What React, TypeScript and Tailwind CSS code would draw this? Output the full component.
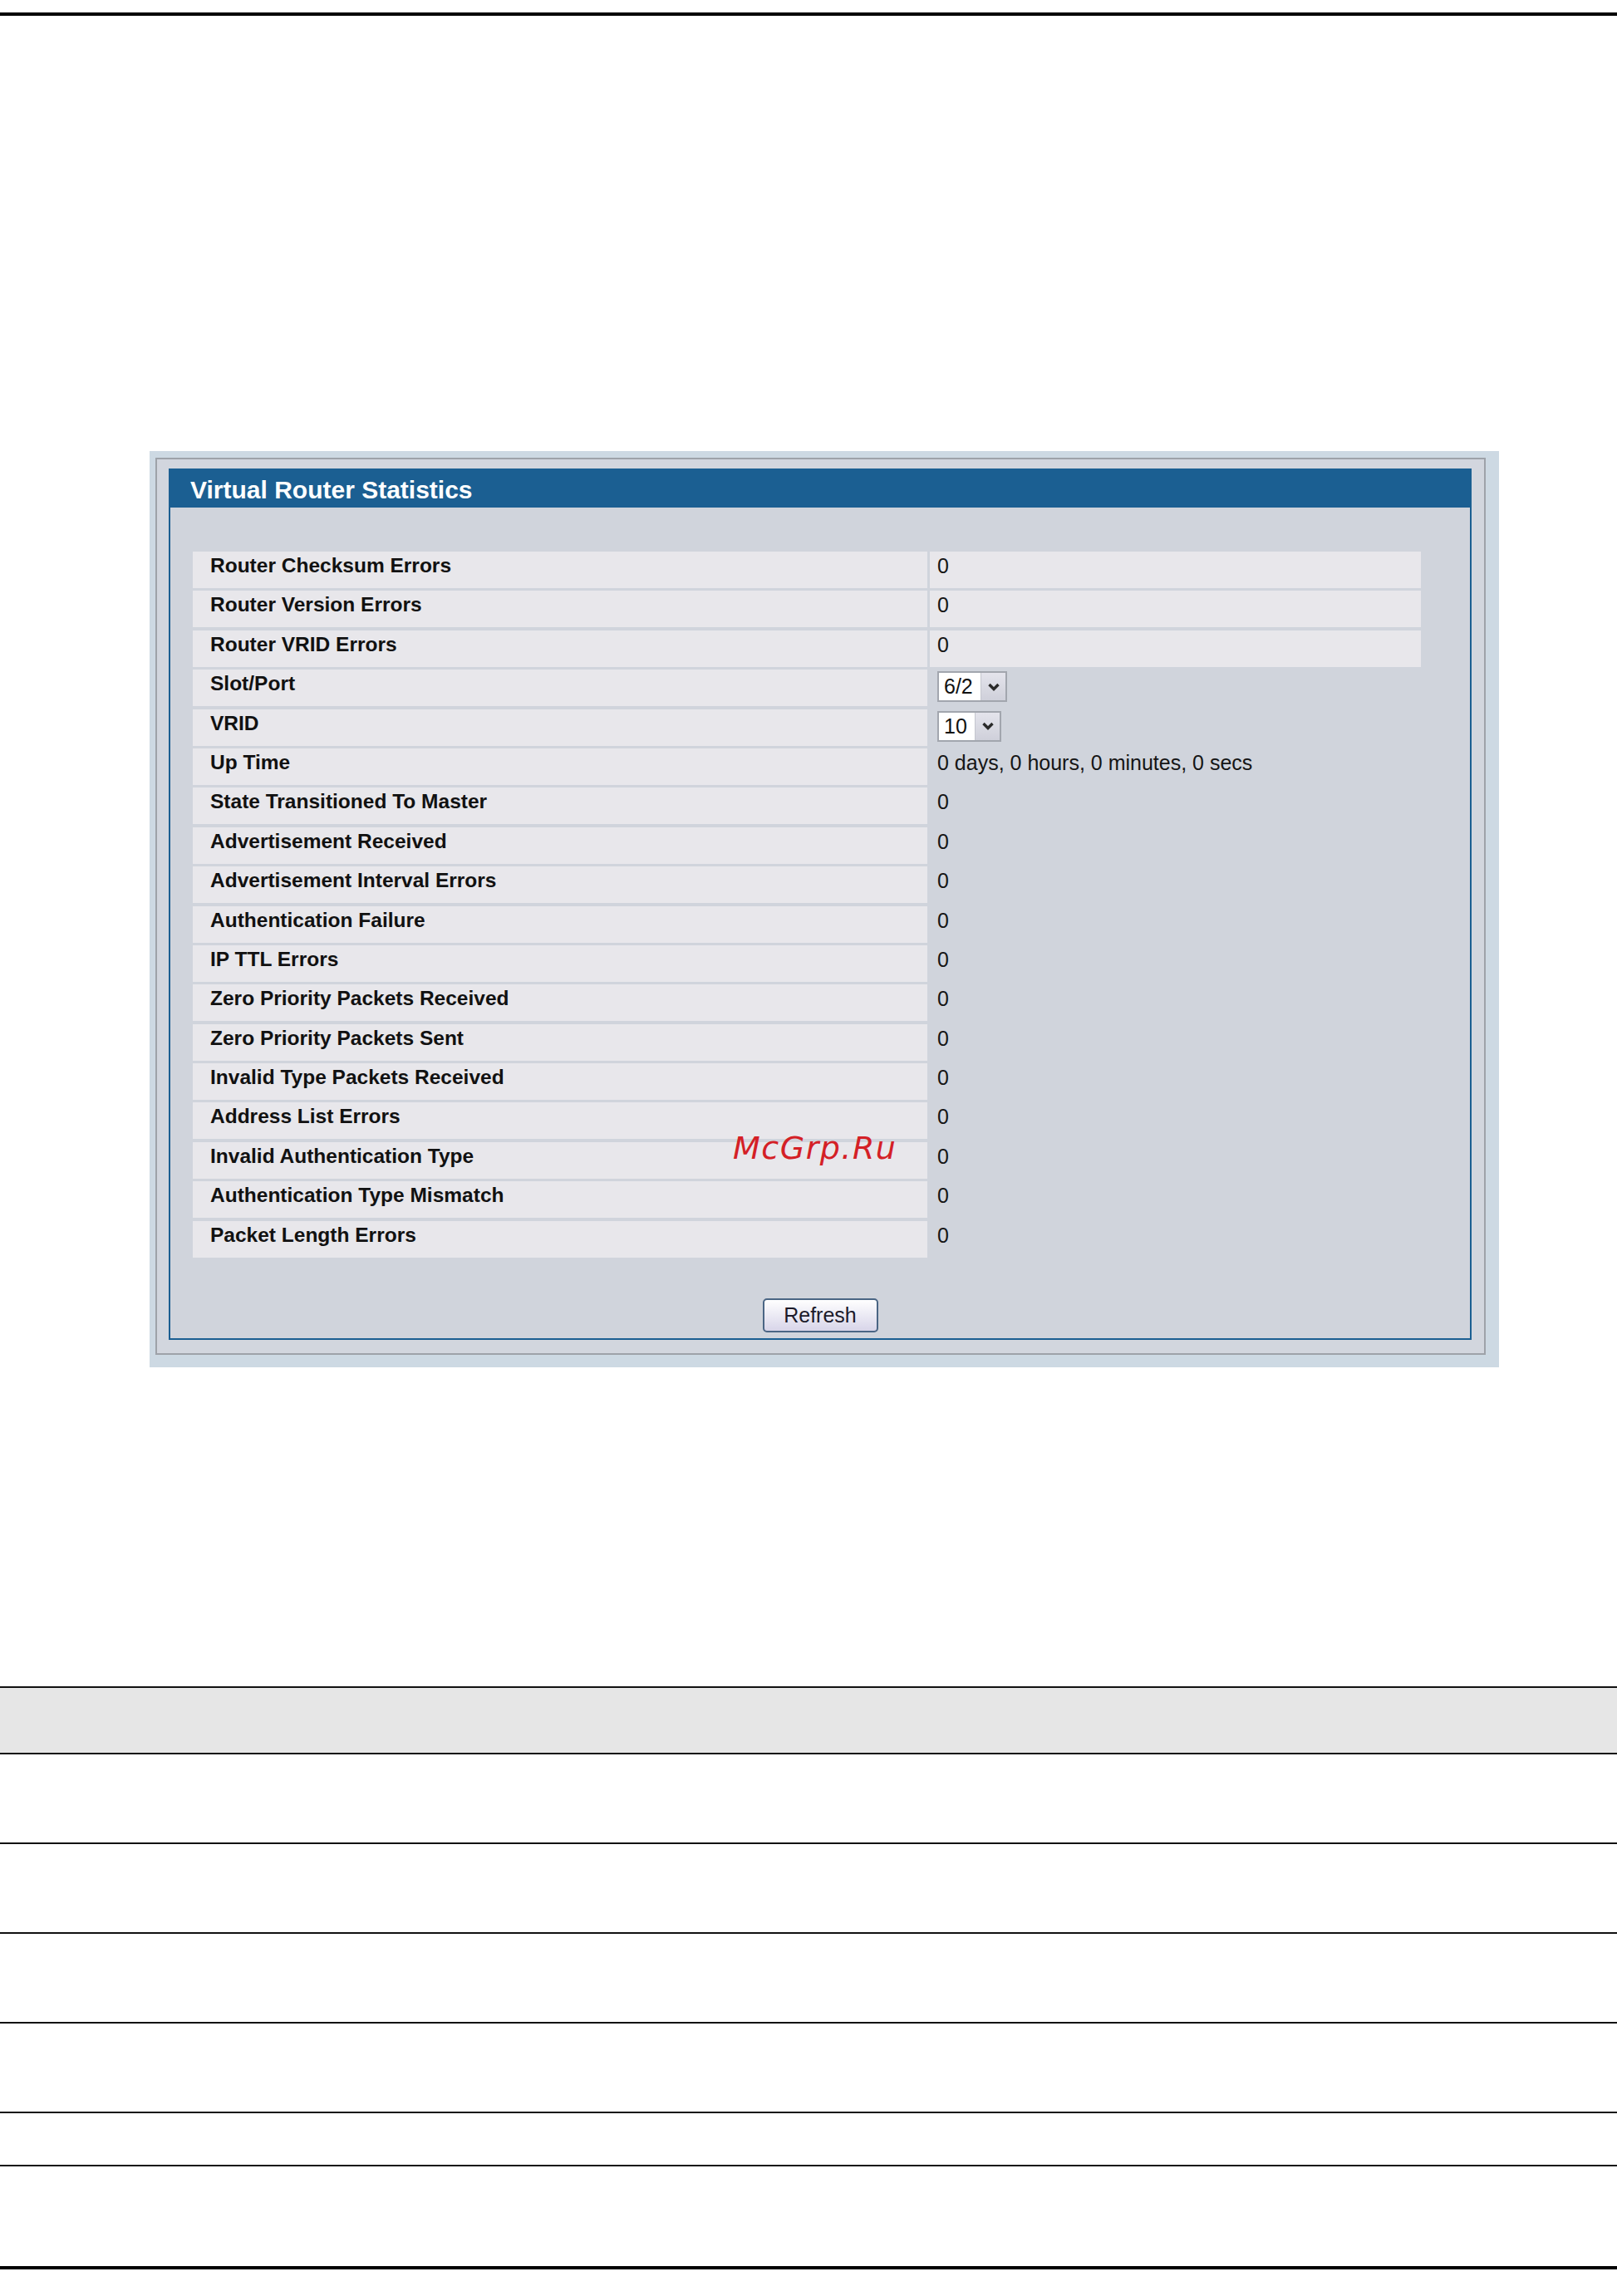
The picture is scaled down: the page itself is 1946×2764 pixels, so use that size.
const rows: { label: string; value: string; cell?: boolean; select?: string }[] = [
  { label: "Router Checksum Errors", value: "0", cell: true },
  { label: "Router Version Errors", value: "0", cell: true },
  { label: "Router VRID Errors", value: "0", cell: true },
  { label: "Slot/Port", value: "6/2", select: "w-[84px]" },
  { label: "VRID", value: "10", select: "w-[77px]" },
  { label: "Up Time", value: "0 days, 0 hours, 0 minutes, 0 secs" },
  { label: "State Transitioned To Master", value: "0" },
  { label: "Advertisement Received", value: "0" },
  { label: "Advertisement Interval Errors", value: "0" },
  { label: "Authentication Failure", value: "0" },
  { label: "IP TTL Errors", value: "0" },
  { label: "Zero Priority Packets Received", value: "0" },
  { label: "Zero Priority Packets Sent", value: "0" },
  { label: "Invalid Type Packets Received", value: "0" },
  { label: "Address List Errors", value: "0" },
  { label: "Invalid Authentication Type", value: "0" },
  { label: "Authentication Type Mismatch", value: "0" },
  { label: "Packet Length Errors", value: "0" },
];

// heights of the empty rows in the table below the screenshot
const tableRows = [108, 108, 108, 108, 64, 122];

const Select = ({ value, width }: { value: string; width: string }) => (
  <div className={`mt-[2px] h-[37px] ${width} flex border-2 border-[#a2a6ae] bg-white`}>
    <div className="flex-1 pl-[6px] text-[25px] leading-[33px] text-[#111]">{value}</div>
    <div className="w-[30px] h-full bg-gradient-to-b from-[#e4e4ec] to-[#cfd0da] border-l border-[#c4c6ce] flex items-center justify-center">
      <svg width="16" height="12" viewBox="0 0 16 12">
        <path d="M2.5 3 L8 8.5 L13.5 3" fill="none" stroke="#2a2a2a" strokeWidth="3.4" />
      </svg>
    </div>
  </div>
);

export default function App() {
  return (
    <div className="relative w-[1946px] h-[2764px] bg-white font-['Liberation_Sans',Arial,sans-serif]">
      <div className="pt-[15px]">
        <div className="h-[4px] bg-black" />
      </div>

      {/* screenshot panel */}
      <div className="ml-[180px] mt-[524px] w-[1624px] h-[1103px] bg-[#cdd9e3] pl-[7px] pt-[8px]">
        <div className="w-[1601px] h-[1080px] border-2 border-[#9ea2a9] bg-[#d2d6de] pl-[14px] pt-[11px]">
          <div className="w-[1568px] h-[1049px] border-2 border-[#1b5f92] bg-[#d0d4dc] flex flex-col">
            <div className="h-[45px] bg-[#1b5f92] pl-[24px] text-white font-bold text-[30px] leading-[47px]">
              Virtual Router Statistics
            </div>

            <div className="pl-[27px] pt-[53px] flex flex-col gap-[3.4px]">
              {rows.map((r) => (
                <div key={r.label} className="flex h-[44px] w-[1478px] gap-[3px]">
                  <div className="w-[884px] h-full bg-[#e8e7eb] pl-[21px] font-bold text-[24.5px] leading-[34px] text-[#111]">
                    {r.label}
                  </div>
                  <div
                    className={`flex-1 h-full pl-[9px] text-[25px] leading-[34px] text-[#151515] ${r.cell ? "bg-[#e8e7eb]" : ""}`}
                  >
                    {r.select ? <Select value={r.value} width={r.select} /> : r.value}
                  </div>
                </div>
              ))}
            </div>

            <div className="mt-[49px] flex justify-center">
              <button className="w-[139px] h-[41px] rounded-[5px] border-2 border-[#4a6584] bg-gradient-to-b from-white to-[#d8d5e9] text-[25px] leading-[35px] text-[#1c1a2a]">
                Refresh
              </button>
            </div>
          </div>
        </div>
      </div>

      {/* watermark */}
      <div className="absolute left-[882px] top-[1363px] text-[38px] leading-none italic tracking-[1.5px] text-[#d42026] font-['DejaVu_Sans',sans-serif]">
        McGrp.Ru
      </div>

      {/* empty table below */}
      <div className="mt-[384px]">
        <div className="h-[80px] border-t-2 border-[#111] bg-[#e6e6e6]" />
        {tableRows.map((h, i) => (
          <div key={i} className="border-t-2 border-[#111]" style={{ height: h }} />
        ))}
        <div className="h-[4px] bg-black" />
      </div>
    </div>
  );
}
